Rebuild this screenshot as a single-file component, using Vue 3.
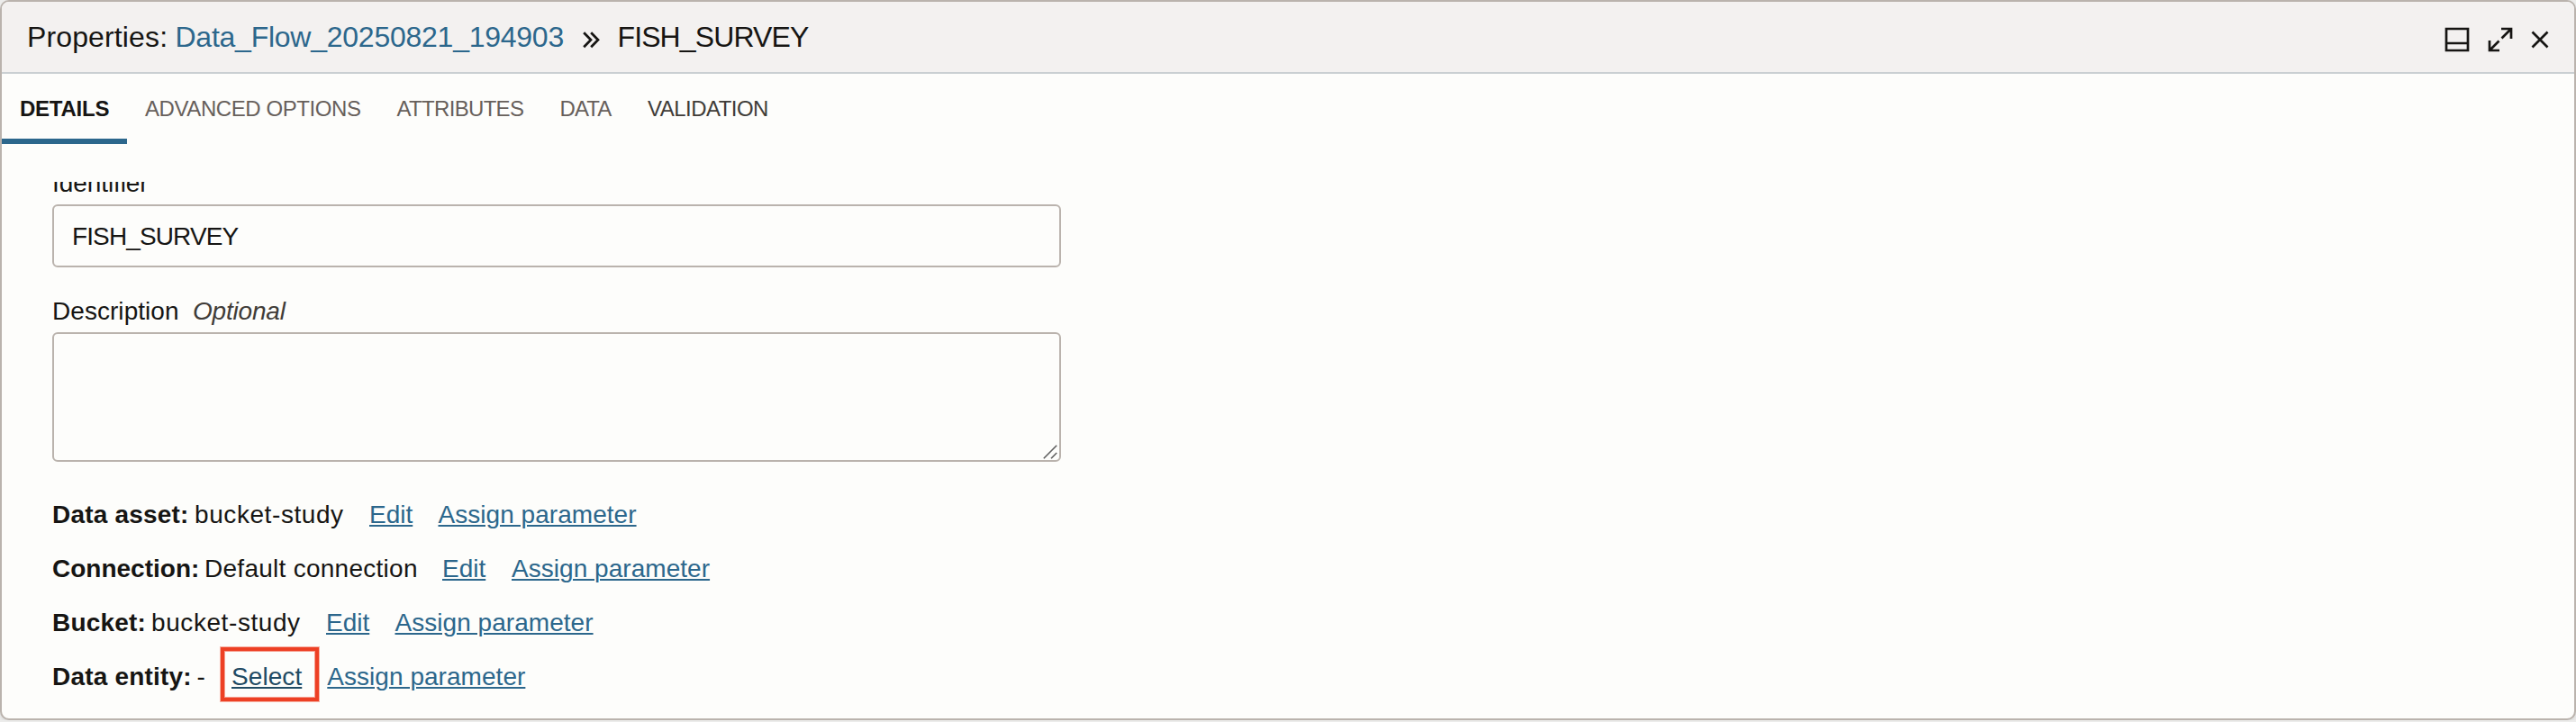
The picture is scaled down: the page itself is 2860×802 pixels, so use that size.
<script setup>
const tabs = [
  { label: 'DETAILS', cls: 'details' },
  { label: 'ADVANCED OPTIONS', cls: 'advanced' },
  { label: 'ATTRIBUTES', cls: 'attributes' },
  { label: 'DATA', cls: 'data' },
  { label: 'VALIDATION', cls: 'validation' },
]
const rows = [
  { cls: 'asset', label: 'Data asset:', value: 'bucket-study', action: 'Edit' },
  { cls: 'connection', label: 'Connection:', value: 'Default connection', action: 'Edit' },
  { cls: 'bucket', label: 'Bucket:', value: 'bucket-study', action: 'Edit' },
  { cls: 'entity', label: 'Data entity:', value: '-', action: 'Select', marked: true },
]
</script>

<template>
  <section class="panel">
    <header class="head">
      <h1 class="title">
        <span class="prefix">Properties:</span>
        <a class="flow">Data_Flow_20250821_194903</a>
        <svg class="chevrons" width="20" height="20" viewBox="0 0 20 20">
          <path d="M1.2 1.2 9 9.2 1.2 17.2M9.2 1.2 17 9.2 9.2 17.2" />
        </svg>
        <span class="node">FISH_SURVEY</span>
      </h1>
      <div class="tools">
        <svg width="28" height="28" viewBox="0 0 28 28">
          <path d="M2 2H26V26H2ZM2 18H26" />
        </svg>
        <svg class="expand" width="28" height="28" viewBox="0 0 28 28">
          <path d="M15.5 12.5 25.5 2.5M15 2H26V13M12.5 15.5 2.5 25.5M2 15V26H13" />
        </svg>
        <svg width="20" height="20" viewBox="0 0 20 20">
          <path d="M1.5 1.5 18.5 18.5M18.5 1.5 1.5 18.5" />
        </svg>
      </div>
    </header>
    <nav class="tabs">
      <span v-for="t in tabs" :key="t.label" class="tab" :class="t.cls">{{ t.label }}</span>
    </nav>
    <!-- Scrolled slightly, so the first label is partly under the top edge -->
    <div class="body">
      <div class="label first">Identifier</div>
      <div class="input">FISH_SURVEY</div>
      <div class="label second"><span class="desc">Description</span><em>Optional</em></div>
      <div class="area">
        <svg width="16" height="16" viewBox="0 0 16 16">
          <path d="M.8 15.2 15.2.8M9 15.2 15.2 9" />
        </svg>
      </div>
      <div class="rows">
        <div v-for="r in rows" :key="r.cls" class="row" :class="r.cls">
          <b>{{ r.label }}</b>
          <span class="value">{{ r.value }}</span>
          <span class="cell">
            <a>{{ r.action }}</a>
            <i v-if="r.marked" class="mark"></i>
          </span>
          <span><a class="assign">Assign parameter</a></span>
        </div>
      </div>
    </div>
  </section>
</template>

<style>
body {
  background: #ececeb;
}
</style>

<style scoped>
.panel {
  box-sizing: border-box;
  width: 2860px;
  height: 800px;
  border: 2px solid #bab3ad;
  border-radius: 10px;
  background: #fdfdfb;
  overflow: hidden;
  display: flex;
  flex-direction: column;
  font-family: "Liberation Sans", Arial, sans-serif;
  font-size: 28px;
  color: #161513;
  box-shadow: 0 2px 4px rgba(0, 0, 0, 0.08);
}
.head {
  height: 78px;
  flex: none;
  display: flex;
  justify-content: space-between;
  background: #f3f1f0;
  border-bottom: 2px solid #cacfd2;
}
.title {
  margin: 0;
  padding-left: 28px;
  display: flex;
  font-size: 32px;
  line-height: 78px;
  font-weight: 400;
  white-space: nowrap;
}
.prefix {
  width: 164.5px;
  letter-spacing: 0.13px;
}
.flow {
  width: 452.5px;
  letter-spacing: -0.25px;
}
.node {
  margin-left: 18.5px;
  letter-spacing: -0.89px;
}
svg {
  fill: none;
  stroke: #161513;
  stroke-width: 2.7;
  display: block;
  flex: none;
}
.chevrons {
  margin-top: 33px;
}
.tools {
  display: flex;
  align-items: center;
  padding: 6px 28px 0 0;
}
.expand {
  margin: 0 20px;
}
a {
  color: #2c678c;
}
.tabs {
  height: 78px;
  flex: none;
  display: flex;
  font-size: 24px;
  line-height: 77px;
  color: #67605b;
  white-space: nowrap;
}
.tab {
  box-sizing: border-box;
}
.details {
  width: 139px;
  height: 78px;
  padding-left: 20px;
  margin-right: 20px;
  font-weight: 700;
  color: #161513;
  letter-spacing: -0.25px;
  border-bottom: 6px solid #2c678c;
}
.advanced {
  width: 279.5px;
  letter-spacing: -0.42px;
}
.attributes {
  width: 181px;
  letter-spacing: -0.68px;
}
.data {
  width: 97.5px;
  letter-spacing: -0.9px;
}
.validation {
  letter-spacing: -0.53px;
  color: #403c38;
}
.body {
  flex: 1;
  min-height: 0;
  margin-top: 42px;
  padding-left: 56px;
  overflow: hidden;
}
.label {
  line-height: 31px;
  height: 31px;
  margin-bottom: 8px;
  display: flex;
}
.first {
  margin-top: -14px;
  letter-spacing: -0.08px;
}
.second {
  margin-top: 33px;
}
.desc {
  width: 156px;
  letter-spacing: 0.05px;
}
em {
  color: #403c38;
  letter-spacing: -0.2px;
}
.input,
.area {
  box-sizing: border-box;
  width: 1120px;
  border: 2px solid #bab3ad;
  border-radius: 6px;
}
.input {
  height: 70px;
  padding-left: 20px;
  line-height: 67px;
  letter-spacing: -0.88px;
}
.area {
  height: 144px;
  display: flex;
  align-items: flex-end;
  justify-content: flex-end;
  padding: 0 2px 1px 0;
}
.area svg {
  stroke: #5f5f5f;
  stroke-width: 1.6;
}
.rows {
  margin-top: 29px;
}
.row {
  display: grid;
  height: 60px;
  line-height: 59px;
  white-space: nowrap;
}
.row a {
  text-decoration: underline;
  text-decoration-thickness: 2px;
  text-underline-offset: 2px;
}
.assign {
  letter-spacing: 0.04px;
}
.row b {
  letter-spacing: 0.2px;
}
.asset {
  grid-template-columns: 158px 194px 76.5px auto;
}
.connection {
  grid-template-columns: 169px 264px 77px auto;
}
.bucket {
  grid-template-columns: 110px 194px 76.5px auto;
}
.entity {
  grid-template-columns: 160.5px 38.5px 106.3px auto;
}
.asset .value,
.bucket .value {
  letter-spacing: 0.58px;
}
.connection .value {
  letter-spacing: 0.27px;
}
.connection b {
  letter-spacing: 0;
}
.cell {
  position: relative;
}
.entity .cell a {
  color: #1f4a63;
  letter-spacing: 0.07px;
}
.mark {
  position: absolute;
  box-sizing: border-box;
  left: -12px;
  top: -3px;
  width: 109px;
  height: 60px;
  border: 4px solid #ed4024;
  box-shadow: 0 0 0 1px rgba(237, 64, 36, 0.4), inset 0 0 0 1px rgba(237, 64, 36, 0.5);
}
</style>
